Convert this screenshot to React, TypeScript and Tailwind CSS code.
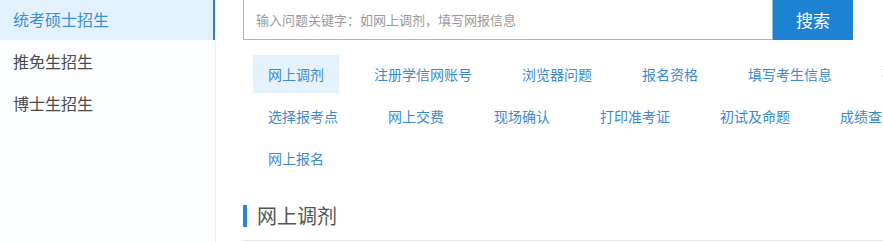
const sideItems = ["统考硕士招生", "推免生招生", "博士生招生"];

const tags = [
  "网上调剂",
  "注册学信网账号",
  "浏览器问题",
  "报名资格",
  "填写考生信息",
  "确认报名信息",
  "选择报考点",
  "网上交费",
  "现场确认",
  "打印准考证",
  "初试及命题",
  "成绩查询",
  "网上报名",
];

export default function App() {
  return (
    <div
      className="flex h-[242px] w-[883px] overflow-hidden bg-white"
      style={{ fontFamily: '"Noto Sans CJK SC", "Noto Sans", sans-serif' }}
    >
      <aside className="w-[216px] shrink-0 border-r border-[#edf0f3] bg-[#fcfdfe]">
        <ul className="-mt-[2px]">
          {sideItems.map((item, i) => (
            <li
              key={item}
              className={
                i === 0
                  ? "h-[42px] border-r-2 border-[#2f80c4] bg-[#e3f1fc] pl-[13px] text-[16px] leading-[42px] text-[#3b8fd5]"
                  : "h-[42px] pl-[13px] text-[16px] leading-[42px] text-[#4a4a4a]"
              }
            >
              {item}
            </li>
          ))}
        </ul>
      </aside>

      <main className="min-w-0 flex-1 pl-[27px]">
        <div className="-mt-[1px] flex h-[41px]">
          <div className="flex w-[530px] items-center border border-[#93bfcb] px-[12px] text-[13px] text-[#9a9a9a]">
            输入问题关键字：如网上调剂，填写网报信息
          </div>
          <button className="w-[80px] bg-[#1e82d2] text-[17px] text-white">
            搜索
          </button>
        </div>

        <div className="ml-[10px] mt-[15px] flex w-[760px] flex-wrap">
          {tags.map((tag, i) => (
            <span
              key={tag}
              className={
                i === 0
                  ? "mb-[4px] mr-[20px] h-[38px] whitespace-nowrap bg-[#e6f2fb] px-[15px] text-[14px] leading-[38px] text-[#3a8ad0]"
                  : "mb-[4px] mr-[20px] h-[38px] whitespace-nowrap px-[15px] text-[14px] leading-[38px] text-[#3a8ad0]"
              }
            >
              {tag}
            </span>
          ))}
        </div>

        <div className="mt-[24px] flex items-center border-b border-[#e6e8ea] pb-[13px]">
          <span className="h-[22px] w-[4px] bg-[#2a86d4]" />
          <h2 className="ml-[10px] text-[20px] leading-[22px] text-[#555]">
            网上调剂
          </h2>
        </div>
      </main>
    </div>
  );
}
